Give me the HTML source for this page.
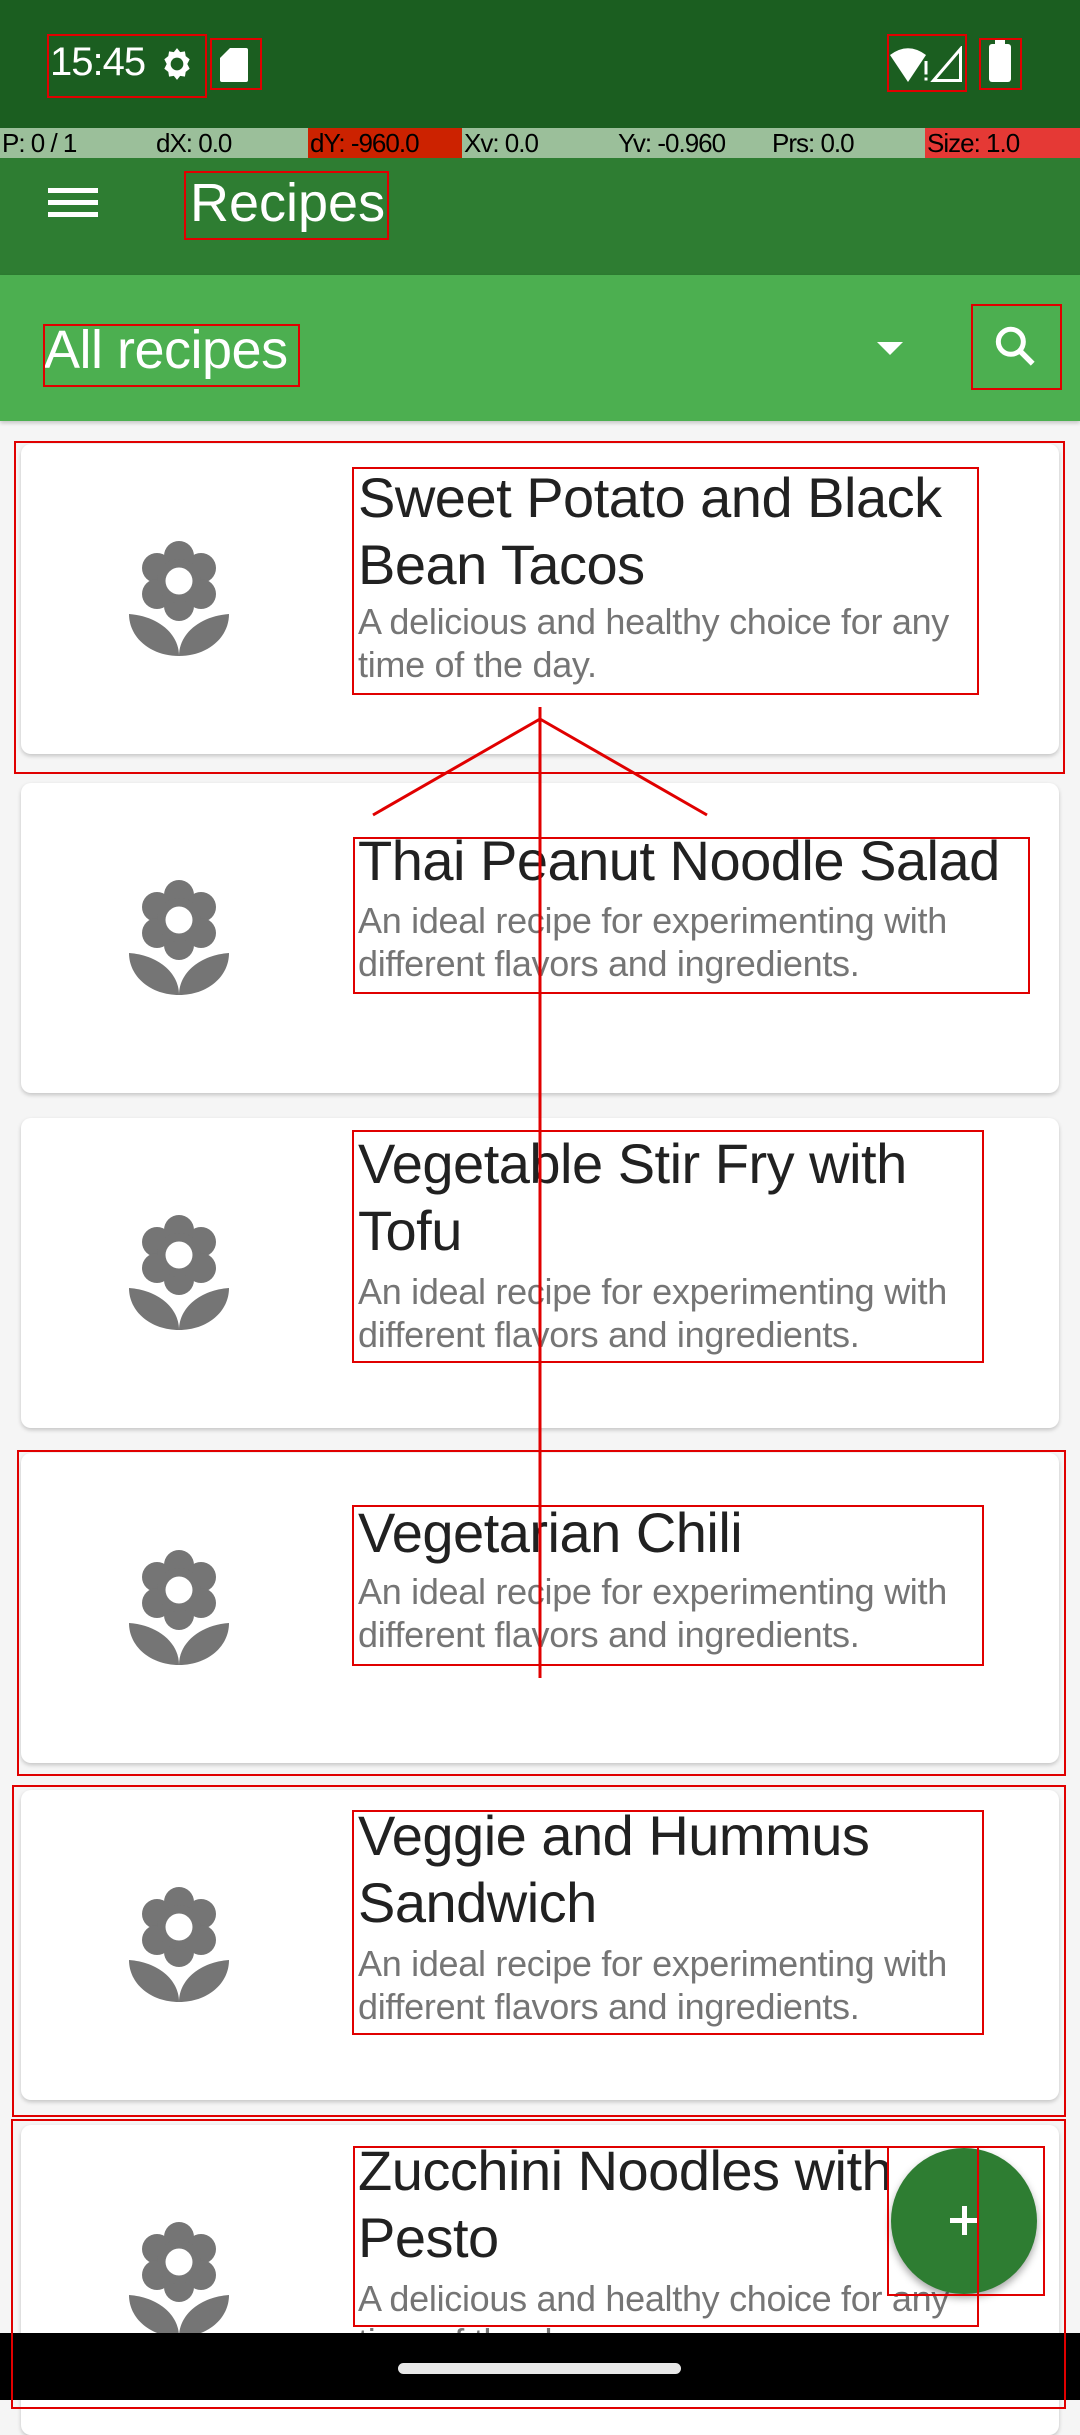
<!DOCTYPE html>
<html><head><meta charset="utf-8"><style>
*{margin:0;padding:0;box-sizing:border-box}
body{width:1080px;height:2400px;overflow:hidden;background:#f5f5f5;font-family:"Liberation Sans",sans-serif;position:relative}
.abs{position:absolute}
.rb{position:absolute;border:2px solid #e00000}
.card{position:absolute;left:21px;width:1038px;height:310px;background:#fff;border-radius:10px;box-shadow:0 2px 4px rgba(0,0,0,.2)}
.ic{position:absolute;left:108px;top:97px;width:100px;height:115px}
.t{position:absolute;left:337px;width:700px;font-size:56px;line-height:67px;color:#212121;white-space:nowrap;letter-spacing:-0.5px}
.d{position:absolute;left:337px;width:635px;font-size:36px;line-height:43px;color:#757575;letter-spacing:-0.3px}
.seg{position:absolute;top:128px;height:30px;font-size:26px;line-height:30px;color:#000;padding-left:2px;letter-spacing:-1px}
</style></head><body>
<div class="abs" style="left:0;top:0;width:1080px;height:128px;background:#1b5e20"></div>
<div class="abs" style="left:50px;top:40px;color:#fff;font-size:40px;letter-spacing:-1px">15:45</div>
<svg class="abs" style="left:158px;top:44px" width="38" height="40" viewBox="0 0 24 24"><path fill="#fff" d="M12 2l2 2.5 3-.5.5 3 2.5 2-1.5 3 1.5 3-2.5 2-.5 3-3-.5L12 22l-2-2.5-3 .5-.5-3L4 15l1.5-3L4 9l2.5-2 .5-3 3 .5z"/><circle cx="12" cy="12" r="4" fill="#1b5e20"/></svg>
<svg class="abs" style="left:220px;top:48px" width="28" height="34" viewBox="0 0 14 17"><path fill="#fff" d="M5 0h8a1 1 0 0 1 1 1v15a1 1 0 0 1-1 1H1a1 1 0 0 1-1-1V5z"/></svg>
<svg class="abs" style="left:890px;top:46px" width="75" height="36" viewBox="0 0 50 24"><path fill="#fff" d="M0 6Q12-3 24 6L12 24z"/><rect x="23" y="10" width="2" height="9" fill="#fff"/><rect x="23" y="21" width="2" height="2" fill="#fff"/><path fill="none" stroke="#fff" stroke-width="2" d="M47 2L29 23H47z"/></svg>
<div class="abs" style="left:989px;top:44px;width:22px;height:38px;background:#fff;border-radius:3px"></div>
<div class="abs" style="left:995px;top:40px;width:10px;height:6px;background:#fff"></div>
<div class="abs" style="left:0;top:128px;width:1080px;height:30px;background:#9bbf9a"></div>
<div class="abs" style="left:308px;top:128px;width:154px;height:30px;background:#cc2200"></div>
<div class="abs" style="left:925px;top:128px;width:155px;height:30px;background:#e53935"></div>
<div class="seg" style="left:0">P: 0 / 1</div><div class="seg" style="left:154px">dX: 0.0</div><div class="seg" style="left:308px">dY: -960.0</div><div class="seg" style="left:462px">Xv: 0.0</div><div class="seg" style="left:616px">Yv: -0.960</div><div class="seg" style="left:770px">Prs: 0.0</div><div class="seg" style="left:925px">Size: 1.0</div>
<div class="abs" style="left:0;top:158px;width:1080px;height:117px;background:#2e7d32"></div>
<div class="abs" style="left:48px;top:188px;width:50px;height:5px;background:#fff;box-shadow:0 12px 0 #fff,0 24px 0 #fff"></div>
<div class="abs" style="left:190px;top:170px;color:#fff;font-size:54px;line-height:66px">Recipes</div>
<div class="abs" style="left:0;top:275px;width:1080px;height:146px;background:#4caf50;box-shadow:0 2px 4px rgba(0,0,0,.2)"></div>
<div class="abs" style="left:44px;top:320px;color:#fff;font-size:54px;line-height:60px;letter-spacing:-0.5px">All recipes</div>
<div class="abs" style="left:877px;top:342px;width:0;height:0;border-left:13px solid transparent;border-right:13px solid transparent;border-top:13px solid #fff"></div>
<svg class="abs" style="left:990px;top:322px" width="50" height="50" viewBox="0 0 24 24"><circle cx="10" cy="9.5" r="6" fill="none" stroke="#fff" stroke-width="2.4"/><path d="M14.5 14l6 6" stroke="#fff" stroke-width="2.6"/></svg>

<svg width="0" height="0" style="position:absolute"><defs><g id="fl" fill="#757575"><circle cx="50" cy="15" r="15"/><circle cx="50" cy="65" r="15"/><circle cx="28" cy="27" r="15"/><circle cx="72" cy="27" r="15"/><circle cx="28" cy="53" r="15"/><circle cx="72" cy="53" r="15"/><circle cx="50" cy="40" r="22"/><path d="M0 73C0 97 22 115 50 115C50 92 28 75 0 73Z"/><path d="M100 73C100 97 78 115 50 115C50 92 72 75 100 73Z"/></g></defs></svg>

<div class="card" style="top:444px"><svg class="ic" viewBox="0 0 100 115"><use href="#fl"/><circle cx="50" cy="40" r="13.5" fill="#fff"/></svg><div class="t" style="top:20px">Sweet Potato and Black<br>Bean Tacos</div><div class="d" style="top:156px">A delicious and healthy choice for any time of the day.</div></div>
<div class="card" style="top:783px"><svg class="ic" viewBox="0 0 100 115"><use href="#fl"/><circle cx="50" cy="40" r="13.5" fill="#fff"/></svg><div class="t" style="top:44px">Thai Peanut Noodle Salad</div><div class="d" style="top:116px">An ideal recipe for experimenting with different flavors and ingredients.</div></div>
<div class="card" style="top:1118px"><svg class="ic" viewBox="0 0 100 115"><use href="#fl"/><circle cx="50" cy="40" r="13.5" fill="#fff"/></svg><div class="t" style="top:12px">Vegetable Stir Fry with<br>Tofu</div><div class="d" style="top:152px">An ideal recipe for experimenting with different flavors and ingredients.</div></div>
<div class="card" style="top:1453px"><svg class="ic" viewBox="0 0 100 115"><use href="#fl"/><circle cx="50" cy="40" r="13.5" fill="#fff"/></svg><div class="t" style="top:46px">Vegetarian Chili</div><div class="d" style="top:117px">An ideal recipe for experimenting with different flavors and ingredients.</div></div>
<div class="card" style="top:1790px"><svg class="ic" viewBox="0 0 100 115"><use href="#fl"/><circle cx="50" cy="40" r="13.5" fill="#fff"/></svg><div class="t" style="top:12px">Veggie and Hummus<br>Sandwich</div><div class="d" style="top:152px">An ideal recipe for experimenting with different flavors and ingredients.</div></div>
<div class="card" style="top:2125px"><svg class="ic" viewBox="0 0 100 115"><use href="#fl"/><circle cx="50" cy="40" r="13.5" fill="#fff"/></svg><div class="t" style="top:12px">Zucchini Noodles with<br>Pesto</div><div class="d" style="top:152px">A delicious and healthy choice for any time of the day.</div></div>

<div class="abs" style="left:891px;top:2148px;width:146px;height:146px;border-radius:50%;background:#2e7d32;box-shadow:0 4px 8px rgba(0,0,0,.35)"></div>
<div class="abs" style="left:950px;top:2218px;width:28px;height:5px;background:#fff"></div>
<div class="abs" style="left:962px;top:2206px;width:5px;height:29px;background:#fff"></div>

<div class="abs" style="left:0;top:2333px;width:1080px;height:67px;background:#000"></div>
<div class="abs" style="left:398px;top:2363px;width:283px;height:11px;border-radius:6px;background:#e8e8e8"></div>

<svg class="abs" style="left:0;top:0" width="1080" height="2400"><g stroke="#e00000" stroke-width="3" fill="none"><path d="M540 707V1678M540 719L373 815M540 719L707 815"/></g></svg>
<div class="rb" style="left:47px;top:34px;width:160px;height:64px"></div>
<div class="rb" style="left:210px;top:38px;width:52px;height:52px"></div>
<div class="rb" style="left:887px;top:34px;width:80px;height:58px"></div>
<div class="rb" style="left:979px;top:38px;width:43px;height:52px"></div>
<div class="rb" style="left:184px;top:171px;width:205px;height:69px"></div>
<div class="rb" style="left:43px;top:324px;width:257px;height:63px"></div>
<div class="rb" style="left:971px;top:304px;width:91px;height:86px"></div>
<div class="rb" style="left:14px;top:441px;width:1051px;height:333px"></div>
<div class="rb" style="left:352px;top:467px;width:627px;height:228px"></div>
<div class="rb" style="left:353px;top:837px;width:677px;height:157px"></div>
<div class="rb" style="left:352px;top:1130px;width:632px;height:233px"></div>
<div class="rb" style="left:17px;top:1450px;width:1049px;height:326px"></div>
<div class="rb" style="left:352px;top:1505px;width:632px;height:161px"></div>
<div class="rb" style="left:12px;top:1785px;width:1054px;height:332px"></div>
<div class="rb" style="left:352px;top:1810px;width:632px;height:225px"></div>
<div class="rb" style="left:11px;top:2119px;width:1055px;height:290px"></div>
<div class="rb" style="left:353px;top:2146px;width:626px;height:181px"></div>
<div class="rb" style="left:887px;top:2146px;width:158px;height:150px"></div>
</body></html>
